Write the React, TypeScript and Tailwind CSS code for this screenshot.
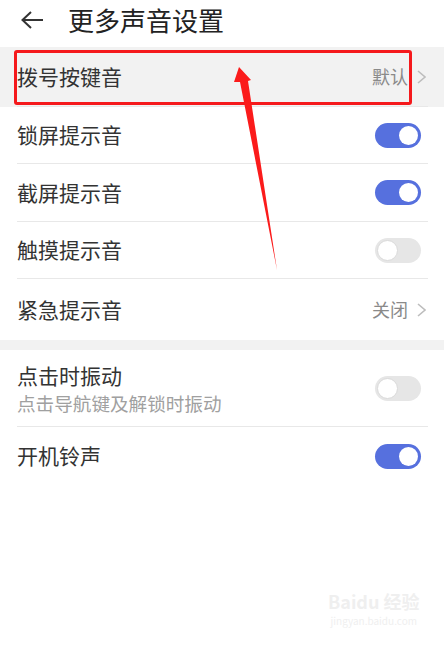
const font = { fontFamily: '"Noto Sans CJK SC", "Noto Sans", sans-serif' };

const Toggle = ({ on }: { on: boolean }) =>
  on ? (
    <div className="w-[46px] h-[25px] rounded-full bg-[#5670de] flex items-center justify-end pr-[3px]">
      <div className="w-[19px] h-[19px] rounded-full bg-white" />
    </div>
  ) : (
    <div className="w-[46px] h-[25px] rounded-full bg-[#e6e6e6] flex items-center pl-[2px]">
      <div className="w-[21px] h-[21px] rounded-full bg-white border border-[#dadada]" />
    </div>
  );

const Chevron = () => (
  <svg width="10" height="16" viewBox="0 0 10 16" className="ml-[8px] mr-[2px]">
    <path d="M2 2l7 6-7 6" fill="none" stroke="#bdbdbd" strokeWidth="1.6" />
  </svg>
);

type Row = {
  title: string;
  value?: string;
  toggle?: boolean;
  h: string;
  line?: boolean;
  bg?: string;
};

const top: Row[] = [
  { title: "拨号按键音", value: "默认", h: "h-[60px]", line: true, bg: "bg-[#f2f2f2]" },
  { title: "锁屏提示音", toggle: true, h: "h-[57px]", line: true },
  { title: "截屏提示音", toggle: true, h: "h-[58px]", line: true },
  { title: "触摸提示音", toggle: false, h: "h-[57px]", line: true },
  { title: "紧急提示音", value: "关闭", h: "h-[61px]" },
];

const SettingRow = ({ r }: { r: Row }) => (
  <div className={`${r.h} ${r.bg ?? "bg-white"} pl-[17px] pr-[16px]`}>
    <div className={`h-full flex items-center justify-between ${r.line ? "border-b border-[#e8e8e8]" : ""}`}>
      <span className="text-[21px] text-[#333]">{r.title}</span>
      {r.value !== undefined ? (
        <div className="flex items-center">
          <span className="text-[18px] text-[#8a8a8a]">{r.value}</span>
          <Chevron />
        </div>
      ) : (
        <div className="pr-[7px]">
          <Toggle on={!!r.toggle} />
        </div>
      )}
    </div>
  </div>
);

export default function App() {
  return (
    <div className="relative w-[444px] h-[645px] bg-white overflow-hidden" style={font}>
      <header className="h-[47px] flex items-center pl-[20px] pb-[8px]">
        <svg width="24" height="20" viewBox="0 0 24 20">
          <path d="M11 2L2.5 10 11 18M2.5 10H23" fill="none" stroke="#333" strokeWidth="2" />
        </svg>
        <h1 className="ml-[24px] text-[26px] text-[#222]">更多声音设置</h1>
      </header>

      {top.map((r) => (
        <SettingRow key={r.title} r={r} />
      ))}

      <div className="h-[10px] bg-[#f2f2f2]" />

      <div className="h-[77px] pl-[17px] pr-[16px]">
        <div className="h-full flex items-center justify-between border-b border-[#e8e8e8]">
          <div className="flex flex-col leading-tight">
            <span className="text-[21px] text-[#333]">点击时振动</span>
            <span className="text-[18.6px] text-[#a0a0a0] mt-[2px]">点击导航键及解锁时振动</span>
          </div>
          <div className="pr-[7px]">
            <Toggle on={false} />
          </div>
        </div>
      </div>

      <SettingRow r={{ title: "开机铃声", toggle: true, h: "h-[58px]" }} />

      {/* annotation overlay */}
      <div className="absolute left-[14px] top-[50px] w-[398px] h-[55px] border-[3px] border-[#f5191c] rounded-[3px]" />
      <svg className="absolute left-0 top-0" width="444" height="645" viewBox="0 0 444 645">
        <path d="M239 67 L251 80 L248 81 L277 270 L240 82 L234 82 Z" fill="#fb1b1b" />
      </svg>

      <div className="absolute left-[328px] top-[592px] flex flex-col items-center gap-[6px] text-[#efefef] leading-none">
        <span className="text-[18px] font-bold">Baidu 经验</span>
        <span className="text-[10px]">jingyan.baidu.com</span>
      </div>
    </div>
  );
}
